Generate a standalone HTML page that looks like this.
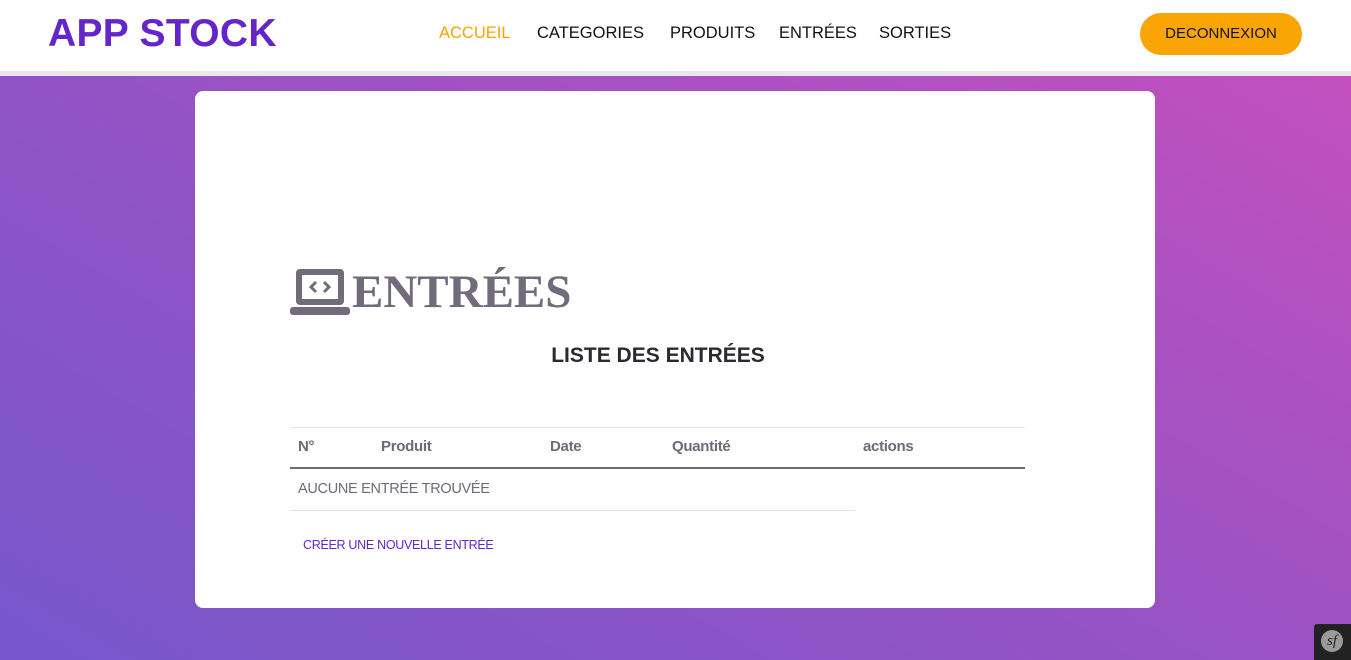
<!DOCTYPE html>
<html><head><meta charset="utf-8"><style>
*{margin:0;padding:0;box-sizing:border-box}
body{width:1351px;height:660px;overflow:hidden;font-family:"Liberation Sans",sans-serif;background:linear-gradient(30deg,#7657cc 0%,#9453c5 45%,#c84fbe 100%);position:relative}
.hdr{position:absolute;left:0;top:0;width:1351px;height:76px;background:#fff;border-bottom:5px solid #e9e6ec}
.logo{position:absolute;left:48px;top:12px;font-size:39px;font-weight:bold;color:#6425c9;letter-spacing:0.3px}
.nav{position:absolute;top:24px;font-size:16.5px;color:#111;}
.nav span{position:absolute;white-space:nowrap}
.btn{position:absolute;left:1140px;top:13px;width:162px;height:42px;border-radius:21px;background:#fba504;color:#111;font-size:15px;text-align:center;line-height:42px}
.card{position:absolute;left:195px;top:91px;width:960px;height:517px;background:#fff;border-radius:8px}
.t{position:absolute;color:#6e6a78;font-weight:bold;font-size:15px;letter-spacing:-0.3px}
</style></head><body>
<div class="hdr">
<div class="logo">APP STOCK</div>
<div class="nav">
<span style="left:439px;color:#f5a300">ACCUEIL</span>
<span style="left:537px">CATEGORIES</span>
<span style="left:670px">PRODUITS</span>
<span style="left:779px">ENTRÉES</span>
<span style="left:879px">SORTIES</span>
</div>
<div class="btn">DECONNEXION</div>
</div>
<div class="card">
<svg style="position:absolute;left:95px;top:176px" width="60" height="50" viewBox="0 0 60 50">
<rect x="6" y="2" width="48" height="36" rx="4" fill="#716b7b"/>
<rect x="12" y="8" width="36" height="24" fill="#fff"/>
<path d="M26 15l-5 5 5 5M34 15l5 5-5 5" stroke="#716b7b" stroke-width="3" fill="none"/>
<rect x="0" y="40" width="60" height="8" rx="3" fill="#716b7b"/>
</svg>
<div style="position:absolute;left:157px;top:174px;font-family:'Liberation Serif',serif;font-weight:bold;font-size:47px;color:#716b7b">ENTRÉES</div>
<div style="position:absolute;left:0;width:926px;text-align:center;top:253px;font-size:21px;font-weight:bold;color:#2a2a32">LISTE DES ENTRÉES</div>
<div style="position:absolute;left:95px;top:336px;width:735px;border-top:1px solid #e6e6e6"></div>
<div class="t" style="left:103px;top:347px">N°</div>
<div class="t" style="left:186px;top:347px">Produit</div>
<div class="t" style="left:355px;top:347px">Date</div>
<div class="t" style="left:477px;top:347px">Quantité</div>
<div class="t" style="left:668px;top:347px">actions</div>
<div style="position:absolute;left:95px;top:376px;width:735px;border-top:2px solid #6e6a78"></div>
<div style="position:absolute;left:103px;top:390px;font-size:14.5px;color:#6e6a78;letter-spacing:-0.3px">AUCUNE ENTRÉE TROUVÉE</div>
<div style="position:absolute;left:95px;top:419px;width:565px;border-top:1px solid #e3e3e3"></div>
<div style="position:absolute;left:108px;top:447px;font-size:12.5px;color:#6425c9;letter-spacing:-0.3px">CRÉER UNE NOUVELLE ENTRÉE</div>
</div>
<div style="position:absolute;left:1314px;top:624px;width:37px;height:36px;background:#222;border-radius:3px 0 0 0">
<div style="position:absolute;left:7px;top:6px;width:22px;height:22px;border-radius:50%;background:#9a9a9a;color:#222;font-family:'Liberation Serif',serif;font-style:italic;font-size:15px;text-align:center;line-height:22px">sf</div>
</div>
</body></html>
